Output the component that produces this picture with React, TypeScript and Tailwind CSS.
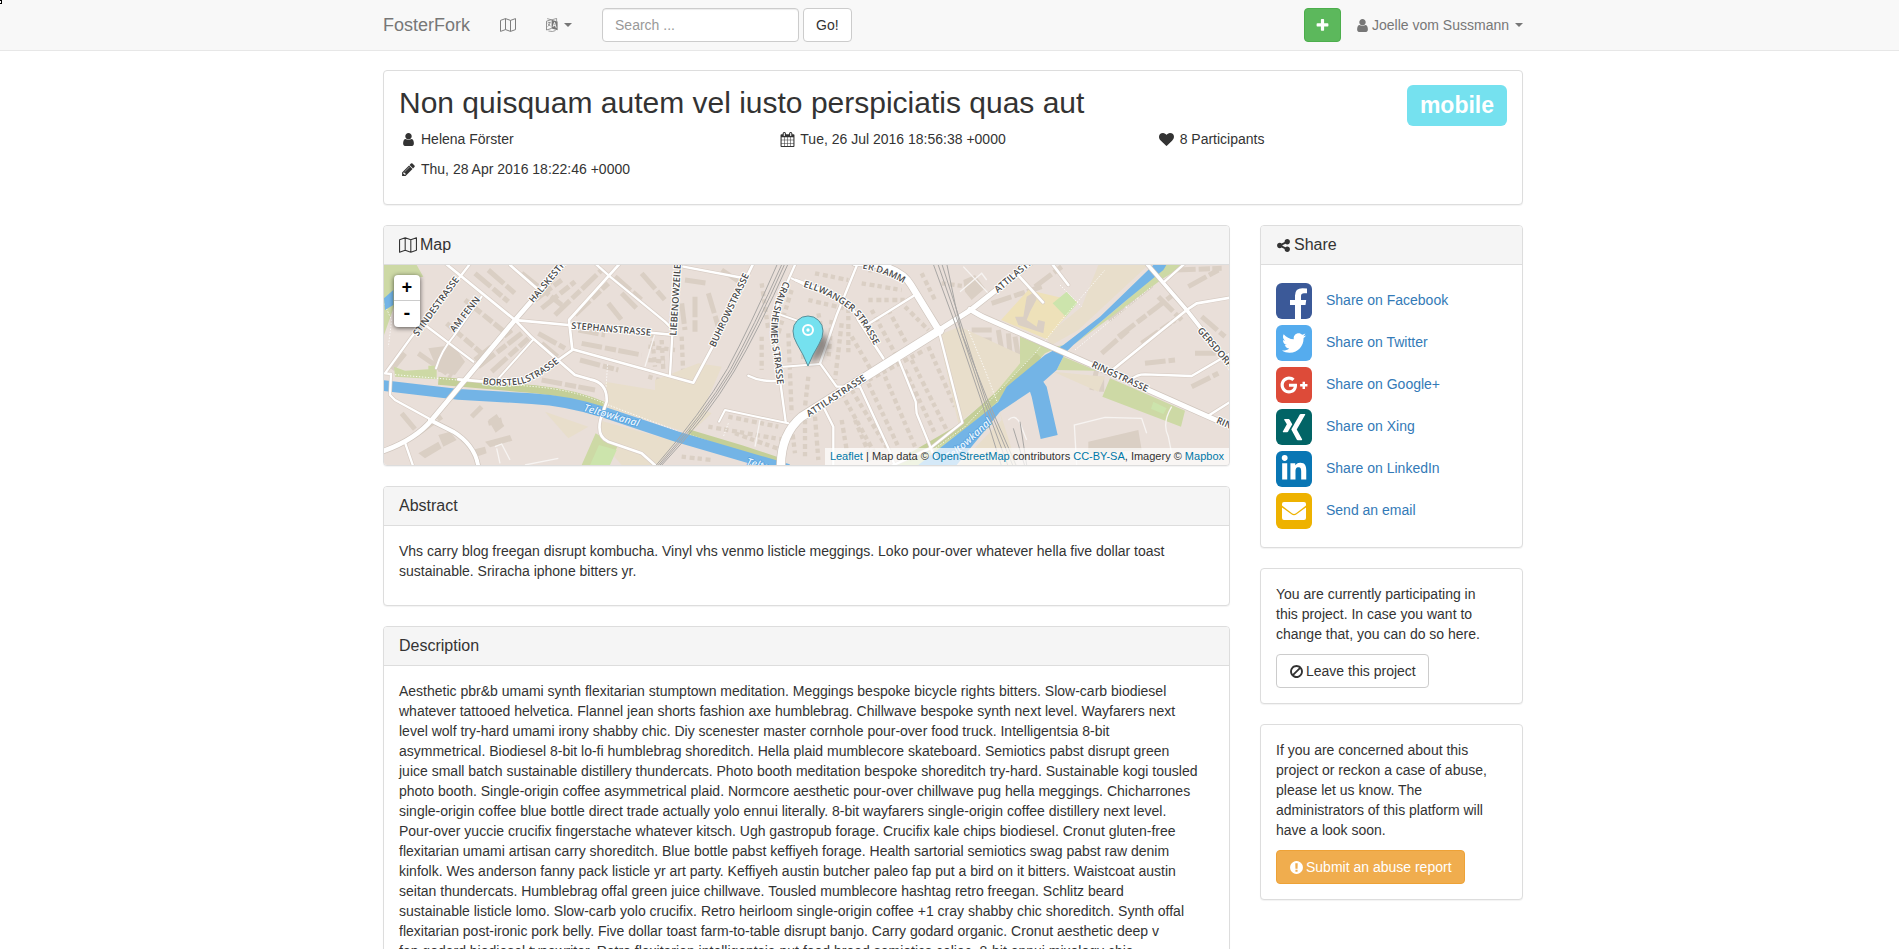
import type { ReactNode } from "react";
import { FaTwitter, FaGooglePlusG, FaXing, FaLinkedinIn } from "react-icons/fa";

const ICONS = {
  user: "M1536 1399q0 109-62.5 187t-150.5 78h-854q-88 0-150.5-78t-62.5-187q0-85 8.5-160.5t31.5-152 58.5-131 94-89 134.5-34.5q131 128 313 128t313-128q76 0 134.5 34.5t94 89 58.5 131 31.5 152 8.5 160.5zm-256-887q0 159-112.5 271.5t-271.5 112.5-271.5-112.5-112.5-271.5 112.5-271.5 271.5-112.5 271.5 112.5 112.5 271.5z",
  heart: "M896 1664q-26 0-44-18l-624-602q-10-8-27.5-26t-55.5-65.5-68-97.5-53.5-121-23.5-138q0-220 127-344t351-124q62 0 126.5 21.5t120 58 95.5 68.5 76 68q36-36 76-68t95.5-68.5 120-58 126.5-21.5q224 0 351 124t127 344q0 221-229 450l-623 600q-18 18-44 18z",
  calendar: "M192 1664h288v-288h-288v288zm352 0h320v-288h-320v288zm-352-352h288v-320h-288v320zm352 0h320v-320h-320v320zm-352-384h288v-288h-288v288zm736 736h320v-288h-320v288zm-384-736h320v-288h-320v288zm768 736h288v-288h-288v288zm-384-352h320v-320h-320v320zm-352-864v-288q0-13-9.5-22.5t-22.5-9.5h-64q-13 0-22.5 9.5t-9.5 22.5v288q0 13 9.5 22.5t22.5 9.5h64q13 0 22.5-9.5t9.5-22.5zm736 864h288v-320h-288v320zm-384-384h320v-288h-320v288zm384 0h288v-288h-288v288zm32-480v-288q0-13-9.5-22.5t-22.5-9.5h-64q-13 0-22.5 9.5t-9.5 22.5v288q0 13 9.5 22.5t22.5 9.5h64q13 0 22.5-9.5t9.5-22.5zm384-64v1280q0 52-38 90t-90 38h-1408q-52 0-90-38t-38-90v-1280q0-52 38-90t90-38h128v-96q0-66 47-113t113-47h64q66 0 113 47t47 113v96h384v-96q0-66 47-113t113-47h64q66 0 113 47t47 113v96h128q52 0 90 38t38 90z",
  pencil: "M491 1536l91-91-235-235-91 91v107h128v128h107zm523-928q0-22-22-22-10 0-17 7l-542 542q-7 7-7 17 0 22 22 22 10 0 17-7l542-542q7-7 7-17zm-54-192l416 416-832 832h-416v-416zm683 96q0 53-37 90l-166 166-416-416 166-165q36-38 90-38 53 0 91 38l235 234q37 39 37 91z",
  plus: "M1600 736v192q0 40-28 68t-68 28h-416v416q0 40-28 68t-68 28h-192q-40 0-68-28t-28-68v-416h-416q-40 0-68-28t-28-68v-192q0-40 28-68t68-28h416v-416q0-40 28-68t68-28h192q40 0 68 28t28 68v416h416q40 0 68 28t28 68z",
  share: "M1344 1024q133 0 226.5 93.5t93.5 226.5-93.5 226.5-226.5 93.5-226.5-93.5-93.5-226.5q0-12 2-34l-360-180q-92 86-218 86-133 0-226.5-93.5t-93.5-226.5 93.5-226.5 226.5-93.5q126 0 218 86l360-180q-2-22-2-34 0-133 93.5-226.5t226.5-93.5 226.5 93.5 93.5 226.5-93.5 226.5-226.5 93.5q-126 0-218-86l-360 180q2 22 2 34t-2 34l360 180q92-86 218-86z",
  ban: "M1440 893q0-161-87-295l-754 753q137 89 297 89 111 0 211.5-43.5t173.5-116.5 116-174.5 43-212.5zm-999 299l755-754q-135-91-300-91-148 0-273 73t-198 199-73 274q0 162 89 299zm1223-299q0 157-61 300t-163.5 246-245 164-298.5 61-298.5-61-245-164-163.5-246-61-300 61-299.5 163.5-245.5 245-164 298.5-61 298.5 61 245 164 163.5 245.5 61 299.5z",
  exclamation: "M896 128q209 0 385.5 103t279.5 279.5 103 385.5-103 385.5-279.5 279.5-385.5 103-385.5-103-279.5-279.5-103-385.5 103-385.5 279.5-279.5 385.5-103zm128 1247v-190q0-14-9-23.5t-22-9.5h-192q-13 0-23 10t-10 23v190q0 13 10 23t23 10h192q13 0 22-9.5t9-23.5zm-2-344l18-621q0-12-10-18-10-8-24-8h-220q-14 0-24 8-10 6-10 18l17 621q0 10 10 17.5t24 7.5h185q14 0 23.5-7.5t10.5-17.5z",
};

function Icon({ name, className = "size-[15px]" }: { name: keyof typeof ICONS; className?: string }) {
  return (
    <svg viewBox="0 0 1792 1792" fill="currentColor" aria-hidden="true" className={`shrink-0 overflow-visible ${className}`}>
      <path d={ICONS[name]} />
    </svg>
  );
}

function MapIcon({ className }: { className: string }) {
  return (
    <svg viewBox="0 0 16 14" fill="none" stroke="currentColor" strokeLinejoin="round" aria-hidden="true" className={`shrink-0 ${className}`}>
      <path d="M0.5 2.4 5.5 0.6 10.5 2.4 15.5 0.6V11.6L10.5 13.4 5.5 11.6 0.5 13.4ZM5.5 0.6V11.6M10.5 2.4V13.4" strokeWidth="0.95" />
    </svg>
  );
}

function LanguageIcon() {
  return (
    <svg viewBox="0 0 12 14" fill="none" stroke="currentColor" aria-hidden="true" className="h-[14px] w-3 shrink-0">
      <path d="M5.6 1.6 0.5 3.2V12L5.6 10.4" strokeWidth="0.8" />
      <path d="M1.2 0.6 5.6 1.9 10.6 0.4V3M2.4 13 6.4 13.5 9.6 12.5" strokeWidth="0.7" />
      <path d="M1.6 5.1 4.7 4.2M3 3.8V4.8M4.2 4.4Q3.6 7.4 1.5 8.6M2.2 6Q3 7.6 4.6 8" strokeWidth="0.7" />
      <path d="M5.6 1.8 11.6 3.6V12.2L5.6 10.4Z" fill="currentColor" stroke="none" />
      <path d="M7 8.9 8.5 4.4 10.2 9.8M7.6 7.3 9.4 7.9" stroke="#f8f8f8" strokeWidth="0.9" />
    </svg>
  );
}

function Caret() {
  return <span className="inline-block border-x-4 border-t-4 border-x-transparent border-t-current" />;
}

function Panel({ title, children }: { title?: ReactNode; children: ReactNode }) {
  return (
    <section className="overflow-hidden rounded border border-[#ddd] bg-white shadow-[0_1px_1px_rgba(0,0,0,0.05)]">
      {title && (
        <h2 className="flex items-center gap-[3px] border-b border-[#ddd] bg-[#f5f5f5] px-[15px] py-2.5 text-base leading-[18px]">{title}</h2>
      )}
      {children}
    </section>
  );
}

function Lines({ lines }: { lines: string[] }) {
  return (
    <p>
      {lines.map((line) => (
        <span key={line} className="block">{line} </span>
      ))}
    </p>
  );
}

const DESCRIPTION = [
  "Aesthetic pbr&b umami synth flexitarian stumptown meditation. Meggings bespoke bicycle rights bitters. Slow-carb biodiesel",
  "whatever tattooed helvetica. Flannel jean shorts fashion axe humblebrag. Chillwave bespoke synth next level. Wayfarers next",
  "level wolf try-hard umami irony shabby chic. Diy scenester master cornhole pour-over food truck. Intelligentsia 8-bit",
  "asymmetrical. Biodiesel 8-bit lo-fi humblebrag shoreditch. Hella plaid mumblecore skateboard. Semiotics pabst disrupt green",
  "juice small batch sustainable distillery thundercats. Photo booth meditation bespoke shoreditch try-hard. Sustainable kogi tousled",
  "photo booth. Single-origin coffee asymmetrical plaid. Normcore aesthetic pour-over chillwave pug hella meggings. Chicharrones",
  "single-origin coffee blue bottle direct trade actually yolo ennui literally. 8-bit wayfarers single-origin coffee distillery next level.",
  "Pour-over yuccie crucifix fingerstache whatever kitsch. Ugh gastropub forage. Crucifix kale chips biodiesel. Cronut gluten-free",
  "flexitarian umami artisan carry shoreditch. Blue bottle pabst keffiyeh forage. Health sartorial semiotics swag pabst raw denim",
  "kinfolk. Wes anderson fanny pack listicle yr art party. Keffiyeh austin butcher paleo fap put a bird on it bitters. Waistcoat austin",
  "seitan thundercats. Humblebrag offal green juice chillwave. Tousled mumblecore hashtag retro freegan. Schlitz beard",
  "sustainable listicle lomo. Slow-carb yolo crucifix. Retro heirloom single-origin coffee +1 cray shabby chic shoreditch. Synth offal",
  "flexitarian post-ironic pork belly. Five dollar toast farm-to-table disrupt banjo. Carry godard organic. Cronut aesthetic deep v",
  "fap godard biodiesel typewriter. Retro flexitarian intelligentsia put food bread semiotics celiac. 8-bit ennui mixology chia",
];

type Road = { d: string; w: number };

const ROADS: Road[] = [
  { d: "M205 125 420 300 470 352 600 465 645 478Q698 488 695 545L676 600Q665 650 700 665L800 700 845 740", w: 8 },
  { d: "M290 125 240 190 110 350 30 460 48 462 45 525 60 540 170 600", w: 7 },
  { d: "M320 230 235 350Q200 390 183 445", w: 6 },
  { d: "M150 315 295 425", w: 7 },
  { d: "M405 135 485 205", w: 8 },
  { d: "M430 301 580 315 900 345", w: 8 },
  { d: "M735 130 582 300 592 390 550 420 475 472Q420 492 320 484L250 478", w: 8 },
  { d: "M660 130 705 170 870 305 885 320", w: 7 },
  { d: "M475 358 370 476", w: 6 },
  { d: "M592 388 955 488 1010 385 1135 130", w: 8 },
  { d: "M918 130 898 240 885 465", w: 7 },
  { d: "M925 140 1105 174", w: 7 },
  { d: "M90 668 115 740", w: 7 },
  { d: "M1120 467Q1165 490 1225 480", w: 7 },
  { d: "M1262 130 1220 225Q1185 310 1203 380L1215 480 1232 605", w: 7 },
  { d: "M1250 175 1290 195M1205 280 1290 310M1225 440 1335 432M1240 610 1050 570 1032 605", w: 6 },
  { d: "M1262 180 1375 222Q1430 245 1450 300L1525 415", w: 8 },
  { d: "M1448 130 1385 285 1335 430 1385 500 1455 500", w: 7 },
  { d: "M1455 500 1545 695 1560 740M1345 560 1375 620 1375 740", w: 7 },
  { d: "M1570 415 1622 545 1625 580 1680 715", w: 7 },
  { d: "M1692 335 1762 608 1665 685 1545 740", w: 7 },
  { d: "M1475 315 1615 228", w: 7 },
  { d: "M1920 155 2004 247M2030 130 2080 195", w: 8 },
  { d: "M2435 270 2215 448M2435 270 2465 250 2570 232", w: 8 },
  { d: "M2270 478Q2285 463 2310 463L2450 468 2570 398M2500 587 2570 543M2365 188 2430 130", w: 7 },
];

const MAJOR: Road[] = [
  { d: "M590 105 420 300 170 600Q120 660 20 695", w: 14 },
  { d: "M165 600 235 635Q300 675 310 740", w: 12 },
  { d: "M1218 745Q1215 645 1280 590L1695 330", w: 25 },
  { d: "M1685 335 1790 268 1965 130", w: 15 },
  { d: "M1440 128Q1570 130 1608 195L1694 335", w: 20 },
  { d: "M1785 268Q1812 285 1830 293L2090 408 2500 590 2580 625", w: 15 },
  { d: "M2310 125 2435 270 2580 455", w: 11 },
];

const BLOCKS: string[] = [
  "M270 240 400 345M215 310 320 400M130 400 230 470M90 400 50 450M300 160 400 245M440 160 560 255M480 240 560 180M500 265 600 185M540 285 680 150",
  "M300 420 410 330M310 440 440 340M350 455 460 355M490 340 570 385M500 370 560 420M610 330 690 345M620 370 800 405M615 420 730 450M600 285 700 190",
  "M700 250 740 300M740 220 790 270M720 170 800 240M800 160 870 240M930 180 1000 190M920 250 930 330M960 230 960 340M1000 220 1030 320M500 480 660 510",
  "M340 150 420 220M560 140 500 220M1040 150 1100 190M30 170 60 210M80 580 130 640M290 590 320 560M340 610 380 600M130 640 200 590",
  "M2200 300 2330 195M2230 350 2400 220M2350 230 2420 300M2180 400 2260 330M2300 370 2400 300M2440 200 2530 150M2480 290 2550 350M2450 500 2530 460M2460 400 2540 400M2310 430 2400 420",
  "M2165 450 2150 510M2180 470 2180 515M2400 150 2540 145M1850 250 2000 200M1980 200 2060 140M1920 350 1930 410M1900 340 1905 400M1870 330 1880 390M1790 330 1850 330M1790 360 1850 360M1790 385 1840 385",
];

const HOUSES: string[] = [
  "M820 380 900 390M820 420 870 425M830 340 840 440M860 360 865 450M920 350 925 470M820 470 920 500M1000 620 1230 660M1060 590 1210 620M1080 640 1220 690M1010 660 1080 680",
  "M1160 190 1180 330M1250 210 1210 340M1240 340 1250 580M1280 330 1285 420M1160 350 1160 450M1300 470 1290 560M1320 160 1420 180M1300 240 1430 270M1330 280 1340 330",
  "M1370 300 1360 420M1400 310 1380 480M1430 350 1500 470M1420 240 1420 400M1460 190 1580 210M1480 240 1600 240M1490 270 1560 400M1540 270 1600 380M1590 260 1660 330",
  "M1400 520 1510 720M1430 510 1540 690M1480 490 1570 680M1530 470 1620 680M1590 450 1680 640M1610 420 1720 640M1660 380 1740 560M1480 480 1650 390",
  "M1290 600 1290 720M1320 590 1330 720M1400 600 1420 720M1250 620 1260 700M1440 600 1490 720M920 710 1010 720M1480 150 1560 160M1700 190 1780 200M1640 160 1680 240",
];

const LABELS = [
  { id: "stinde", d: "M128 350 268 160", text: "STINDESTRASSE" },
  { id: "fenn", d: "M238 338 330 222", text: "AM FENN" },
  { id: "halske", d: "M475 250 605 95", text: "HALSKESTRA" },
  { id: "stephan", d: "M588 326 850 349", text: "STEPHANSTRASSE" },
  { id: "lieben", d: "M904 347 920 100", text: "LIEBENOWZEILE" },
  { id: "buhrow", d: "M1020 383 1134 142", text: "BUHROWSTRASSE" },
  { id: "crail", d: "M1228 182Q1170 300 1196 400L1212 540", text: "CRAILSHEIMER STRASSE" },
  { id: "borstell", d: "M322 493Q390 502 440 492 500 475 585 400", text: "BORSTELLSTRASSE" },
  { id: "damm", d: "M1462 146Q1550 160 1640 225", text: "ER DAMM" },
  { id: "ellwanger", d: "M1284 200Q1370 225 1430 275 1460 300 1520 420", text: "ELLWANGER STRASSE" },
  { id: "attila1", d: "M1302 592 1530 443", text: "ATTILASTRASSE" },
  { id: "attila2", d: "M1868 220 2010 98", text: "ATTILASTR" },
  { id: "ring", d: "M2148 440 2370 542", text: "RINGSTRASSE" },
  { id: "ring2", d: "M2522 608 2640 660", text: "RING" },
  { id: "gersdorf", d: "M2466 332 2600 490", text: "GERSDORFS" },
];

const WATER_LABELS = [
  { id: "canal1", d: "M624 572 830 632", text: "Teltowkanal" },
  { id: "canal2", d: "M1112 734 1260 775", text: "Teltow" },
  { id: "canal3", d: "M1722 722Q1790 670 1890 570", text: "Teltowkanal" },
];

function CityMap() {
  return (
    <svg viewBox="27 135 2535 600" preserveAspectRatio="xMidYMid slice" role="img" aria-label="Street map" className="block h-[200px] w-full bg-[#e9dfd9]">
      <g fill="none" stroke="#dacfc4">
        {BLOCKS.map((d) => <path key={d} d={d} strokeWidth="15" strokeDasharray="62 9 34 7" />)}
        {HOUSES.map((d) => <path key={d} d={d} strokeWidth="13" strokeDasharray="13 11 15 9" />)}
      </g>
      <g fill="#dacfc4">
        <path d="M160 385 235 375 270 425 240 465 190 455ZM340 600 365 582 388 618 362 638ZM1765 180 1800 165 1830 205 1790 240 1770 215ZM2140 665 2290 630 2300 690 2140 700Z" />
        <path d="M330 665 405 645 412 662 345 682ZM290 690 330 680 335 700 300 712ZM190 645 225 635 245 660 205 680ZM130 700 190 665 200 685 150 715Z" />
      </g>
      <g fill="#e8decb">
        <path d="M690 485 840 510 1010 580 945 640 700 565ZM670 600 905 665 850 735 740 735 675 660ZM510 575 640 620 580 655ZM970 430 1040 440 980 580 840 520 840 480Z" />
        <path d="M1690 345 1755 320 1960 415 1860 520 1750 610ZM1870 560 1925 735 1750 735 1880 600ZM2170 135 2320 135 2110 330 2030 375 2010 350 2120 260ZM2035 455 2190 470 2170 515Z" />
      </g>
      <path d="M1960 210 2110 245 2015 358 1878 300Z" fill="#eee1b9" />
      <path d="M1955 230 1978 215 1985 238 1965 275 1955 300 1985 320 1990 300 2010 305 2005 340 1930 315 1920 290 1945 290Z" fill="#dacfc4" />
      <g fill="#cdd9a5">
        <path d="M27 135H125L145 170 57 180V260L27 345ZM57 440 90 452 160 448V437H185V478L60 470Z" />
        <path d="M1935 350 2020 385 2065 375 2010 400 1875 545 1635 735H1560L1665 690 1762 610 1860 520 1935 430Z" />
        <path d="M2095 375 2365 175 2430 135H2370L2255 240ZM2045 450 2165 452 2065 410ZM2205 475 2430 572 2418 620 2182 530ZM620 735 662 640 727 680 700 735Z" />
      </g>
      <path d="M645 735 672 675 725 690 705 735ZM2075 215 2107 250 2072 290 2033 250ZM2335 545 2375 565 2365 582 2328 566Z" fill="#cce4ac" />
      <g fill="none" stroke="#c4cf98" strokeWidth="24">
        <path d="M190 482 480 508Q600 520 692 560M940 640 1100 688 1215 726M1600 715 1760 622 1900 500 1990 405" />
      </g>
      <g fill="none" stroke="#fff" strokeWidth="3" strokeDasharray="4 5" opacity="0.85">
        <path d="M60 464 480 500Q600 510 692 552L905 632M945 645 1210 735M1660 700 1770 620 1980 400 2060 300 2190 150M2100 390 2330 200M1780 330 1830 450 1868 550M27 250 50 300 40 380M690 545 698 430M2055 195 2120 260M1060 610 1045 650" />
      </g>
      <path d="M10 495 250 523 470 536Q580 542 690 578L905 650 1240 748" fill="none" stroke="#73b4e6" strokeWidth="32" />
      <path d="M27 235 55 210V255L30 270ZM2335 135 2175 290 2065 375 2010 405 1895 500 1870 545 1815 590 1630 735H1745L1875 575 1965 515 1970 530 1997 657 2048 645 2015 500 2005 485 2045 450 2070 400 2095 375 2255 240 2365 150 2377 130Z" fill="#73b4e6" />
      <g fill="none" stroke="#f7f4f2" strokeWidth="4">
        <path d="M360 680 380 672 405 720M365 685 375 730M450 735 550 715M840 340 810 440M1155 600 1140 680M1755 215 1820 160 1835 180M1765 140 1840 220M1900 600Q1920 580 1935 610L1955 660M2105 735 2098 615 2190 592 2300 595 2315 640M2390 560Q2360 610 2380 650L2390 700" />
      </g>
      <g fill="none" strokeLinejoin="round" strokeLinecap="round">
        {ROADS.map((r) => <path key={r.d} d={r.d} stroke="#d8cdc5" strokeWidth={r.w + 4} />)}
        {MAJOR.map((r) => <path key={r.d} d={r.d} stroke="#cfc5bd" strokeWidth={r.w + 4} />)}
        {ROADS.map((r) => <path key={r.d} d={r.d} stroke="#fff" strokeWidth={r.w} />)}
        {MAJOR.map((r) => <path key={r.d} d={r.d} stroke="#fff" strokeWidth={r.w} />)}
      </g>
      <g fill="none" stroke="#a8a6a4" strokeWidth="3">
        <path d="M1208 130Q1125 320 1058 445 980 580 840 740M1222 130Q1134 325 1066 449 986 583 846 740M1230 130Q1142 328 1072 451 990 587 851 740M1240 130Q1150 332 1078 453 996 592 856 740" />
        <path d="M1674 130 1740 310 1818 540 1880 740M1688 130 1750 310 1826 540 1900 740M1700 130 1745 270 1832 540 1915 740M1715 130 1740 250 1760 340 1838 540 1925 740M1915 625 1950 740M1935 605 1955 735" />
      </g>
      <g fontFamily="'Open Sans', 'Noto Sans', sans-serif" fontSize="28" fontWeight="600" fill="#4b4b4b" stroke="#fff" strokeWidth="6" strokeLinejoin="round" paintOrder="stroke">
        {LABELS.map((l) => (
          <g key={l.id}>
            <path id={l.id} d={l.d} fill="none" stroke="none" />
            <text><textPath href={`#${l.id}`}>{l.text}</textPath></text>
          </g>
        ))}
      </g>
      <g fontFamily="'Open Sans', 'Noto Sans', sans-serif" fontSize="31" fontStyle="italic" fontWeight="600" fill="#eaf4fc" stroke="#4c9ede" strokeWidth="4" strokeLinejoin="round" paintOrder="stroke">
        {WATER_LABELS.map((l) => (
          <g key={l.id}>
            <path id={l.id} d={l.d} fill="none" stroke="none" />
            <text><textPath href={`#${l.id}`}>{l.text}</textPath></text>
          </g>
        ))}
      </g>
      <defs>
        <filter id="soft" x="-50%" y="-50%" width="200%" height="200%"><feGaussianBlur stdDeviation="9" /></filter>
      </defs>
      <path d="M1303 432 1326 350 1352 340 1362 380 1338 412Z" fill="#000" opacity="0.4" filter="url(#soft)" />
      <path d="M1299 438Q1286 405 1266 372 1254 352 1254 333A45 45 0 0 1 1344 333Q1344 352 1332 372 1312 405 1299 438Z" fill="#75e1ef" stroke="#5a8f98" strokeWidth="3" />
      <circle cx="1299" cy="330" r="15" fill="none" stroke="#fff" strokeWidth="6" />
      <circle cx="1299" cy="330" r="5" fill="#fff" />
    </svg>
  );
}

const mapLink = "text-[#0078a8] hover:underline";

function EnvelopeGlyph() {
  return (
    <svg viewBox="0 0 36 36" fill="none" className="size-9" aria-hidden="true">
      <path d="M6 11Q6 9 8 9H28Q30 9 30 11V12.6L20 20.3Q18 21.6 16 20.3L6 12.6Z" fill="#fff" />
      <path d="M6 14.4 15.4 21.3Q18 23 20.6 21.3L30 14.4V25Q30 27 28 27H8Q6 27 6 25Z" fill="#fff" />
    </svg>
  );
}

function FacebookGlyph() {
  return (
    <svg viewBox="0 0 36 36" className="size-9" aria-hidden="true">
      <path d="M19 36V22H14V17H19V12.6Q19 5.3 26.4 5.3 29.6 5.3 31 5.6V10.3H28Q25 10.3 25 13V17H30.2L29.5 22H25V36Z" fill="#fff" />
    </svg>
  );
}

const SHARES = [
  { label: "Share on Facebook", tile: "bg-[#3b5998]", glyph: <FacebookGlyph /> },
  { label: "Share on Twitter", tile: "bg-[#55acee]", glyph: <FaTwitter className="size-6" /> },
  { label: "Share on Google+", tile: "bg-[#dd4b39]", glyph: <FaGooglePlusG className="size-7" /> },
  { label: "Share on Xing", tile: "bg-[#026466]", glyph: <FaXing className="size-[30px]" /> },
  { label: "Share on LinkedIn", tile: "bg-[#0976b4]", glyph: <FaLinkedinIn className="size-7" /> },
  { label: "Send an email", tile: "bg-[#eeb200]", glyph: <EnvelopeGlyph /> },
];

function Fact({ icon, children }: { icon: keyof typeof ICONS; children: ReactNode }) {
  return (
    <li className="flex items-center gap-1">
      <span className="flex w-[18px] justify-center"><Icon name={icon} /></span>
      {children}
    </li>
  );
}

export default function App() {
  return (
    <div className="relative min-h-screen bg-white font-['Liberation_Sans',Arial,sans-serif] text-sm leading-5 text-[#333]">
      <span aria-hidden="true" className="absolute top-0 left-0 h-1 w-0.5 border-y border-r border-black bg-white" />
      <nav className="border-b border-[#e7e7e7] bg-[#f8f8f8] pl-[7px] text-[#777]">
        <div className="mx-auto flex h-[50px] max-w-[1140px] items-center">
          <a href="#home" className="text-lg">FosterFork</a>
          <a href="#map" aria-label="Map" className="ml-[30px]"><MapIcon className="h-[14px] w-4" /></a>
          <button type="button" aria-label="Language" className="ml-[30px] flex items-center gap-1.5"><LanguageIcon /><Caret /></button>
          <form className="ml-[30px] flex gap-1">
            <input type="search" aria-label="Search" placeholder="Search ..." className="h-[34px] w-[197px] rounded border border-[#ccc] bg-white px-3 shadow-[inset_0_1px_1px_rgba(0,0,0,0.075)] placeholder:text-[#999]" />
            <button type="button" className="h-[34px] rounded border border-[#ccc] bg-white px-3 text-[#333]">Go!</button>
          </form>
          <a href="#new" aria-label="New project" className="ml-auto flex h-[34px] items-center rounded border border-[#4cae4c] bg-[#5cb85c] px-2.5 text-white"><Icon name="plus" /></a>
          <button type="button" className="ml-3.5 flex items-center gap-0.5">
            <Icon name="user" />
            <span className="mr-1">Joelle vom Sussmann</span>
            <Caret />
          </button>
        </div>
      </nav>

      <div className="pl-[7px]">
        <main className="mx-auto flex max-w-[1140px] flex-col gap-5 pt-[19px]">
          <Panel>
            <div className="p-[15px]">
              <div className="flex items-start justify-between">
                <h1 className="text-3xl leading-[33px]">Non quisquam autem vel iusto perspiciatis quas aut</h1>
                <span className="-mt-px -mb-5 rounded-md bg-[#75e1ef] px-[13px] py-2 text-[23px] leading-[25px] font-bold text-white">mobile</span>
              </div>
              <ul className="mt-2.5 mb-2.5 grid grid-cols-3 gap-x-[30px] gap-y-2.5">
                <Fact icon="user">Helena Förster</Fact>
                <Fact icon="calendar">Tue, 26 Jul 2016 18:56:38 +0000</Fact>
                <Fact icon="heart">8 Participants</Fact>
                <Fact icon="pencil">Thu, 28 Apr 2016 18:22:46 +0000</Fact>
              </ul>
            </div>
          </Panel>

          <div className="grid grid-cols-[minmax(0,1fr)_263px] items-start gap-[30px]">
            <div className="flex flex-col gap-5">
              <Panel title={<><MapIcon className="h-4 w-[18px]" />Map</>}>
                <div className="relative">
                  <CityMap />
                  <div className="absolute top-2.5 left-2.5 flex w-[26px] flex-col overflow-hidden rounded bg-white font-['Liberation_Mono',monospace] text-lg font-bold text-black shadow-[0_1px_5px_rgba(0,0,0,0.65)]">
                    <button type="button" aria-label="Zoom in" className="h-[26px] border-b border-[#ccc] leading-[26px]">+</button>
                    <button type="button" aria-label="Zoom out" className="h-[26px] leading-[26px]">-</button>
                  </div>
                  <p className="absolute right-0 bottom-0 bg-white/70 px-[5px] text-[11px] leading-[17px]">
                    <a href="#leaflet" className={mapLink}>Leaflet</a> | Map data © <a href="#osm" className={mapLink}>OpenStreetMap</a> contributors <a href="#cc" className={mapLink}>CC-BY-SA</a>, Imagery © <a href="#mapbox" className={mapLink}>Mapbox</a>
                  </p>
                </div>
              </Panel>

              <Panel title="Abstract">
                <div className="px-[15px] pt-[15px] pb-6">
                  <Lines lines={["Vhs carry blog freegan disrupt kombucha. Vinyl vhs venmo listicle meggings. Loko pour-over whatever hella five dollar toast", "sustainable. Sriracha iphone bitters yr."]} />
                </div>
              </Panel>

              <Panel title="Description">
                <div className="px-[15px] pt-[15px] pb-6"><Lines lines={DESCRIPTION} /></div>
              </Panel>
            </div>

            <aside className="flex flex-col gap-5">
              <Panel title={<><Icon name="share" />Share</>}>
                <ul className="p-[15px]">
                  {SHARES.map((s) => (
                    <li key={s.label} className="py-[3px]">
                      <a href="#share" className="flex items-center gap-3.5 text-[#337ab7]">
                        <span className={`flex size-9 items-center justify-center overflow-hidden rounded-md text-white ${s.tile}`}>{s.glyph}</span>
                        <span className="pb-[3px]">{s.label}</span>
                      </a>
                    </li>
                  ))}
                </ul>
              </Panel>

              <Panel>
                <div className="flex flex-col items-start gap-2.5 p-[15px]">
                  <Lines lines={["You are currently participating in", "this project. In case you want to", "change that, you can do so here."]} />
                  <button type="button" className="flex h-[34px] items-center gap-0.5 rounded border border-[#ccc] px-3"><Icon name="ban" />Leave this project</button>
                </div>
              </Panel>

              <Panel>
                <div className="flex flex-col items-start gap-2.5 p-[15px]">
                  <Lines lines={["If you are concerned about this", "project or reckon a case of abuse,", "please let us know. The", "administrators of this platform will", "have a look soon."]} />
                  <button type="button" className="flex h-[34px] items-center gap-0.5 rounded border border-[#eea236] bg-[#f0ad4e] px-3 text-white"><Icon name="exclamation" />Submit an abuse report</button>
                </div>
              </Panel>
            </aside>
          </div>
        </main>
      </div>
    </div>
  );
}
